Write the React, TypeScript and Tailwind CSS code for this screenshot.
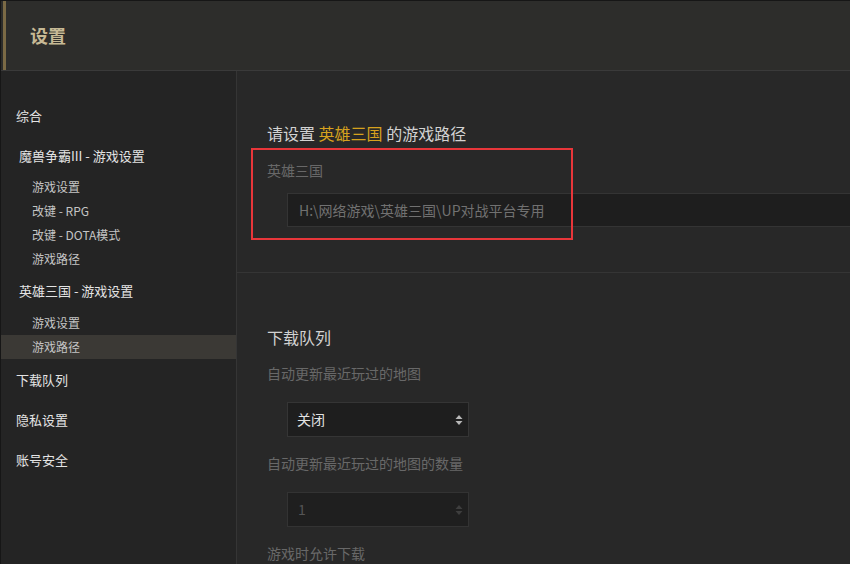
import React from "react";

const font = { fontFamily: '"Noto Sans CJK SC", "Noto Sans", sans-serif' };

function Arrows({ dim }: { dim?: boolean }) {
  const c = dim ? "#3e3e3e" : "#b8b8b8";
  return (
    <svg width="8" height="12" viewBox="0 0 8 12" className="shrink-0">
      <path d="M4 1 L7.5 5 L0.5 5 Z" fill={c} />
      <path d="M4 11 L7.5 7 L0.5 7 Z" fill={c} />
    </svg>
  );
}

function TopItem({ label, h }: { label: string; h: string }) {
  return (
    <div className={`flex items-center pl-[15px] text-[13px] text-[#e4e4e4] ${h}`}>{label}</div>
  );
}

function GroupItem({ label }: { label: string }) {
  return (
    <div className="flex h-[40px] items-center pl-[18px] text-[13px] text-[#e4e4e4]">{label}</div>
  );
}

function SubItem({ label, active }: { label: string; active?: boolean }) {
  return (
    <div
      className={`flex h-[24px] items-center pl-[31px] text-[12px] text-[#c4c4c4] ${
        active ? "bg-[#3b3935]" : ""
      }`}
    >
      {label}
    </div>
  );
}

export default function App() {
  return (
    <div
      style={font}
      className="relative flex h-[564px] w-[850px] flex-col overflow-hidden border-l border-t border-[#161616] bg-[#282828]"
    >
      {/* Header */}
      <div className="flex h-[70px] shrink-0 border-b border-[#3a3a3a] bg-[#2d2d2b] pl-[2px]">
        <div className="w-[3px] bg-[#7b6a45]" />
        <div className="flex items-center pl-[24px] text-[18px] font-bold text-[#c6b995]">设置</div>
      </div>

      {/* Body */}
      <div className="flex flex-1">
        {/* Sidebar */}
        <div className="w-[236px] shrink-0 border-r border-[#353535] bg-[#242424] pt-[25px]">
          <TopItem label="综合" h="h-[40px]" />
          <div className="flex h-[39px] items-center pl-[18px] text-[13px] text-[#e4e4e4]">
            魔兽争霸III - 游戏设置
          </div>
          <SubItem label="游戏设置" />
          <SubItem label="改键 - RPG" />
          <SubItem label="改键 - DOTA模式" />
          <SubItem label="游戏路径" />
          <GroupItem label="英雄三国 - 游戏设置" />
          <SubItem label="游戏设置" />
          <SubItem label="游戏路径" active />
          <TopItem label="下载队列" h="h-[41px]" />
          <TopItem label="隐私设置" h="h-[40px]" />
          <TopItem label="账号安全" h="h-[40px]" />
        </div>

        {/* Main */}
        <div className="flex-1">
          <div className="h-[202px] border-b border-[#353535] pl-[30px] pt-[50px]">
            <div className="flex h-[24px] items-center text-[16px] text-[#d2d2d2]">
              请设置&nbsp;<span className="text-[#d6a21e]">英雄三国</span>&nbsp;的游戏路径
            </div>
            <div className="mt-[13px] flex h-[24px] items-center text-[14px] text-[#686868]">英雄三国</div>
            <div className="ml-[20px] mt-[11px] flex h-[34px] w-[600px] items-center border border-[#343434] bg-[#1e1e1e] pl-[11px] text-[14px] text-[#717171]">
              H:\网络游戏\英雄三国\UP对战平台专用
            </div>
          </div>

          <div className="pl-[30px] pt-[52px]">
            <div className="flex h-[24px] items-center text-[16px] text-[#d2d2d2]">下载队列</div>
            <div className="mt-[12px] flex h-[24px] items-center text-[14px] text-[#686868]">
              自动更新最近玩过的地图
            </div>
            <div className="ml-[20px] mt-[17px] flex h-[35px] w-[182px] items-center justify-between border border-[#353535] bg-[#1e1e1e] pl-[9px] pr-[5px] text-[14px] text-[#e2e2e2]">
              <span>关闭</span>
              <Arrows />
            </div>
            <div className="mt-[14px] flex h-[24px] items-center text-[14px] text-[#686868]">
              自动更新最近玩过的地图的数量
            </div>
            <div className="ml-[20px] mt-[17px] flex h-[35px] w-[182px] items-center justify-between border border-[#333333] bg-[#1f1f1f] pl-[10px] pr-[5px] text-[14px] text-[#555555]">
              <span>1</span>
              <Arrows dim />
            </div>
            <div className="mt-[14px] flex h-[24px] items-center text-[14px] text-[#686868]">游戏时允许下载</div>
          </div>
        </div>
      </div>

      {/* Red annotation box */}
      <div className="pointer-events-none absolute left-[250px] top-[147px] h-[92px] w-[322px] border-2 border-[#e8363a]" />
    </div>
  );
}
